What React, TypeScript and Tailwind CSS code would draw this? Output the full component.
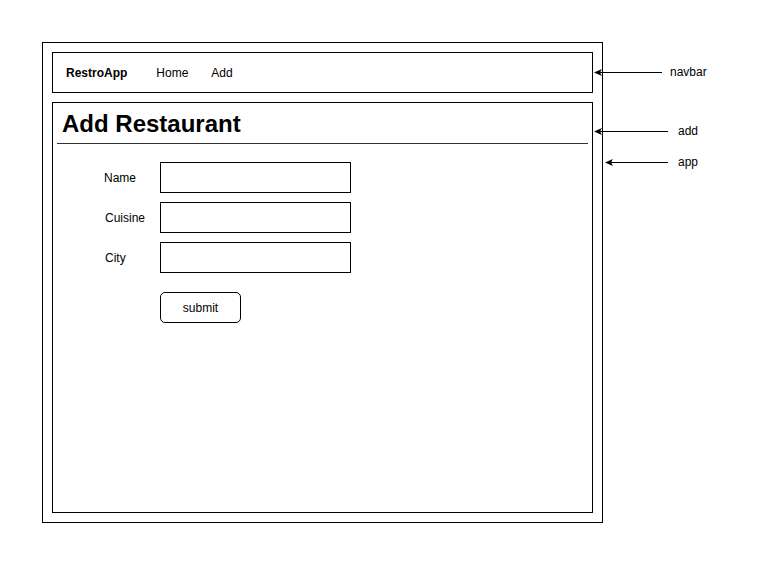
import React from 'react';

const fields = ['Name', 'Cuisine', 'City'];

const notes = [
  { label: 'navbar', y: 72, x1: 662, x2: 594, tx: 670 },
  { label: 'add', y: 131, x1: 668, x2: 594, tx: 678 },
  { label: 'app', y: 162, x1: 668, x2: 605, tx: 678 },
];

const App: React.FC = () => {
  return (
    <div className="relative w-[772px] h-[582px] bg-white p-[42px] font-['Liberation_Sans',Arial,sans-serif] text-black">
      {/* app */}
      <div className="w-[561px] h-[481px] border border-black p-[9px] flex flex-col gap-[9px]">
        {/* navbar */}
        <nav className="h-[41px] border border-black flex items-center pl-[13px] text-[12px]">
          <span className="font-bold">RestroApp</span>
          <span className="ml-[29px]">Home</span>
          <span className="ml-[23px]">Add</span>
        </nav>

        {/* add */}
        <div className="flex-1 border border-black px-[4px]">
          <h1 className="text-[24px] leading-[28px] font-bold pt-[7px] pb-[5px] pl-[5px] border-b border-[#333]">
            Add Restaurant
          </h1>
          <form className="mt-[18px] pl-[47px] flex flex-col gap-[9px]">
            {fields.map((f) => (
              <div key={f} className="flex items-center">
                <label className={`w-[56px] text-[12px] ${f === 'Name' ? '' : 'pl-[1px]'}`}>{f}</label>
                <input className="w-[191px] h-[31px] border border-black outline-none" />
              </div>
            ))}
            <div className="pl-[56px] mt-[10px]">
              <button
                type="button"
                className="w-[81px] h-[31px] border border-black rounded-[5px] text-[12px] bg-white"
              >
                submit
              </button>
            </div>
          </form>
        </div>
      </div>

      {/* annotations */}
      <svg className="absolute left-0 top-0" width={772} height={582}>
        {notes.map((n) => (
          <g key={n.label}>
            <line x1={n.x1} y1={n.y + 0.5} x2={n.x2 + 4} y2={n.y + 0.5} stroke="#000" strokeWidth={1} />
            <path d={`M${n.x2} ${n.y + 0.5} L${n.x2 + 8} ${n.y - 3} L${n.x2 + 6} ${n.y + 0.5} L${n.x2 + 8} ${n.y + 4} Z`} fill="#000" />
          </g>
        ))}
      </svg>
      {notes.map((n) => (
        <span
          key={n.label}
          className="absolute text-[12px] leading-[14px]"
          style={{ left: n.tx, top: n.y - 7 }}
        >
          {n.label}
        </span>
      ))}
    </div>
  );
};

export default App;
